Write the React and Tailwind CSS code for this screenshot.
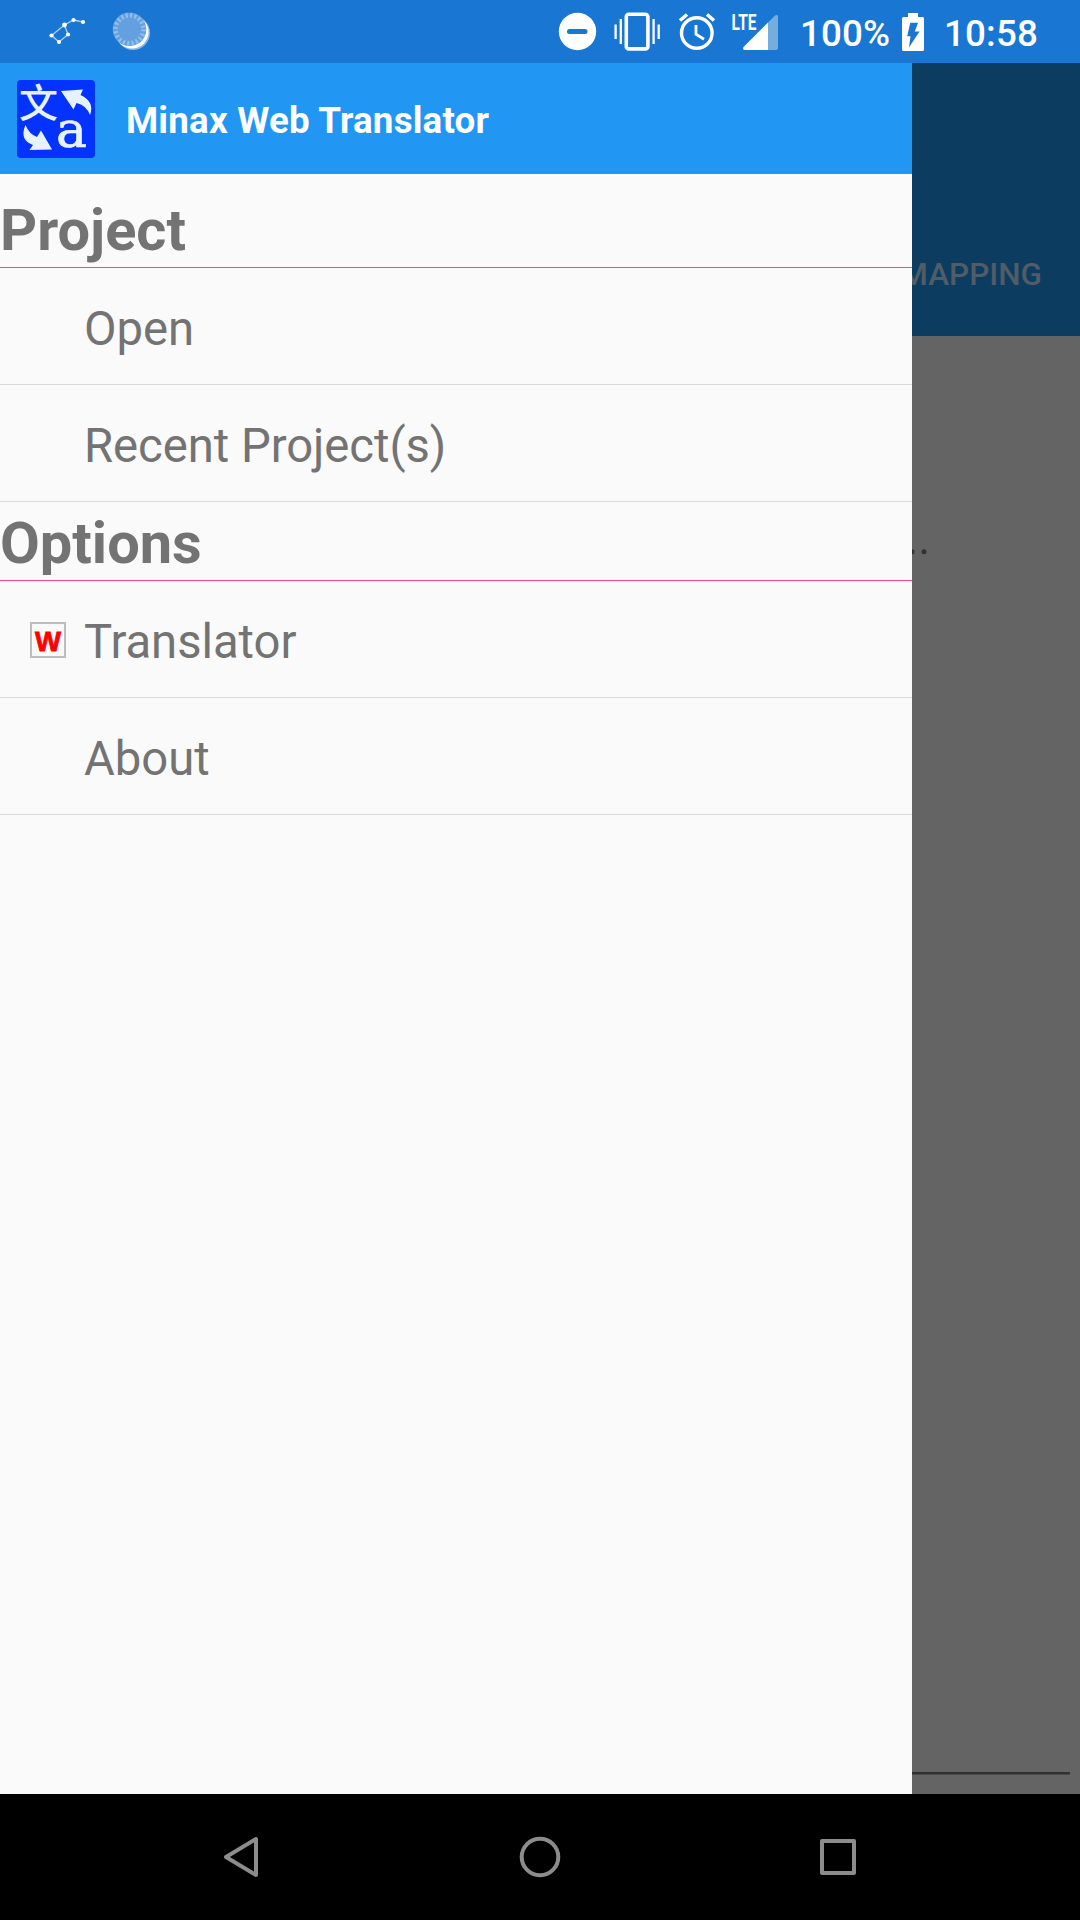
const StarsIcon = () => (
  <svg className="h-[63px] w-[200px] shrink-0" viewBox="0 0 200 63" fill="none">
    <path d="M83 22 L73.5 20 L64.5 25 L51.5 35.5 L59 42 L68 34.5 L64.5 25" stroke="#fff" strokeOpacity=".65" strokeWidth="1.3" />
    <g fill="#fff">
      <circle cx="83" cy="22" r="2.1" />
      <circle cx="73.5" cy="20" r="2.1" />
      <circle cx="64.5" cy="25" r="2.4" />
      <circle cx="51.5" cy="35.5" r="2.1" />
      <circle cx="59" cy="42" r="2.1" />
      <circle cx="68" cy="34.5" r="2.1" />
    </g>
    <circle cx="133" cy="33" r="17" fill="#8ab8e8" />
    <circle cx="132" cy="32" r="16.6" fill="#fff" />
    <circle cx="129.5" cy="29.3" r="16.8" fill="#64a0df" />
    <circle cx="129.5" cy="29.3" r="14" stroke="#93bdea" strokeWidth="4.6" strokeDasharray="2.2 2.2" />
  </svg>
);

const StatusIcons = () => (
  <svg className="h-[63px] w-[240px] shrink-0" viewBox="540 0 240 63" fill="none" stroke="#fff">
    <circle cx="577.5" cy="31.5" r="18.7" fill="#fff" stroke="none" />
    <rect x="567" y="29" width="20.5" height="5" rx="2.5" fill="#1976d2" stroke="none" />
    <rect x="626.3" y="14.3" width="21.6" height="34.6" rx="2.5" strokeWidth="3.6" />
    <path d="M620.8 19V44M653.6 19V44M615.6 24.5V39M658.7 24.5V39" strokeWidth="2.3" />
    <circle cx="696.8" cy="33" r="15.3" strokeWidth="3.4" />
    <path d="M696 25V34.3L704 39.3" strokeWidth="2.8" />
    <path d="M680 20.5L687 14.5M707 14.5L714 20.5" strokeWidth="3.6" />
    <path d="M743.5 47L768 22.5V50H744Q742.5 49 743.5 47Z" fill="#fff" stroke="none" />
    <path d="M768 22.5L775 15.5Q778 14 778 17V48Q778 50 776 50H768Z" fill="#75addf" stroke="none" />
    <text x="731.5" y="30" fill="#fff" stroke="none" fontFamily="Roboto" fontWeight="700" fontSize="22.5" textLength="25" lengthAdjust="spacingAndGlyphs">LTE</text>
  </svg>
);

const BatteryIcon = () => (
  <svg className="h-[38px] w-[22px] shrink-0" viewBox="0 0 22 38">
    <path d="M6 0H16V4H20.5Q22 4 22 5.5V36.5Q22 38 20.5 38H1.5Q0 38 0 36.5V5.5Q0 4 1.5 4H6Z" fill="#fff" />
    <path d="M8.3 9.8H16L12.8 18.5H17.5L7 34.5L8.5 23.3H5.2Z" fill="#1976d2" />
  </svg>
);

const AppLogo = () => (
  <svg className="h-[78px] w-[78px] shrink-0 overflow-visible" viewBox="17 80 78 78" fill="#e6f3ff">
    <rect x="17" y="80" width="78" height="78" rx="4" fill="#0433ff" />
    <text x="19" y="116.5" fontFamily="Noto Sans CJK SC" fontWeight="500" fontSize="39">文</text>
    <text x="56" y="147" fontFamily="DejaVu Serif" fontSize="51" stroke="#e6f3ff" strokeWidth=".7" textLength="31" lengthAdjust="spacingAndGlyphs">a</text>
    <path d="M61 91L83 89.5L80.5 95Q95 102 90 115Q86 105 76.5 103L73.5 109.5Z" />
    <path d="M25.5 125Q29 134 37 137L41 130.5L52 149.5L29.5 150L33 145Q19 140 25.5 125Z" />
  </svg>
);

const Section = ({ title, children }) => (
  <section>
    <h2 className="h-[79px] border-b border-[#ff4081] pt-[5px] text-[57.75px] leading-[73px] font-bold">{title}</h2>
    {children}
  </section>
);

const Item = ({ label, icon }) => (
  <div className="flex h-[117px] items-center border-b border-[#dadada]">
    <div className="flex w-[84px] shrink-0 pt-[2px] pl-[30px]">{icon}</div>
    <span className="pt-[6px] text-[47.25px] leading-[56px] tracking-[-0.05px] whitespace-nowrap">{label}</span>
  </div>
);

const TranslatorIcon = () => (
  <div className="flex h-9 w-9 items-center justify-center border-2 border-[#bdbdbd]">
    <svg className="h-8 w-8 shrink-0" viewBox="0 0 32 32">
      <text x="3" y="27" fill="#f00" stroke="#f00" strokeWidth=".8" fontFamily="Liberation Sans" fontWeight="700" fontSize="28" textLength="26" lengthAdjust="spacingAndGlyphs">W</text>
    </svg>
  </div>
);

export default function App() {
  return (
    <div className="flex h-[1920px] w-[1080px] flex-col overflow-hidden bg-black font-['Roboto',sans-serif]">
      <div className="flex h-[63px] shrink-0 items-center bg-[#1976d2] text-white">
        <StarsIcon />
        <div className="grow" />
        <StatusIcons />
        <div className="flex w-[300px] shrink-0 items-center text-[36.75px] leading-[43px] font-medium tracking-[0.15px]">
          <span className="w-[122px] shrink-0 pt-[3px] pl-[20px] whitespace-nowrap">100%</span>
          <BatteryIcon />
          <span className="pt-[3px] pl-[20px]">10:58</span>
        </div>
      </div>

      <div className="flex h-[1731px] shrink-0">
        <aside className="w-[912px] shrink-0 bg-[#fafafa] text-[#737373]">
          <header className="mb-[15px] flex h-[111px] items-center bg-[#2196f3] pl-[17px]">
            <AppLogo />
            <h1 className="pt-[4px] pl-[31px] text-[36.75px] leading-[44px] font-bold tracking-[0.19px] text-white">Minax Web Translator</h1>
          </header>
          <Section title="Project">
            <Item label="Open" />
            <Item label="Recent Project(s)" />
          </Section>
          <Section title="Options">
            <Item label="Translator" icon={<TranslatorIcon />} />
            <Item label="About" />
          </Section>
        </aside>

        <main className="flex grow flex-col overflow-hidden bg-[#646464]">
          <div className="flex h-[273px] shrink-0 items-end justify-end bg-[#0d3c61] pr-[38px] pb-[43px]">
            <span className="text-[31.5px] leading-[37px] font-medium text-[#505c66]">MAPPING</span>
          </div>
          <div className="flex h-[221px] shrink-0 items-end justify-start">
            <svg className="h-[10px] w-[20px]" viewBox="0 0 20 10" fill="#323232">
              <circle cx="0" cy="4.7" r="2.5" />
              <circle cx="12" cy="4.7" r="2.5" />
            </svg>
          </div>
          <div className="grow" />
          <div className="mr-[10px] mb-[19px] h-[3px] shrink-0 border-b border-[#4b4b4b] bg-[#303030]" />
        </main>
      </div>

      <nav className="flex h-[126px] shrink-0 items-center justify-center bg-black">
        <svg className="h-[126px] w-[1080px]" viewBox="0 1794 1080 126" fill="none" stroke="#8c8c8c" strokeWidth="4" strokeLinejoin="round">
          <path d="M256 1839V1875L226 1857Z" />
          <circle cx="540" cy="1857" r="18.3" />
          <rect x="822" y="1841" width="32" height="32" />
        </svg>
      </nav>
    </div>
  );
}
